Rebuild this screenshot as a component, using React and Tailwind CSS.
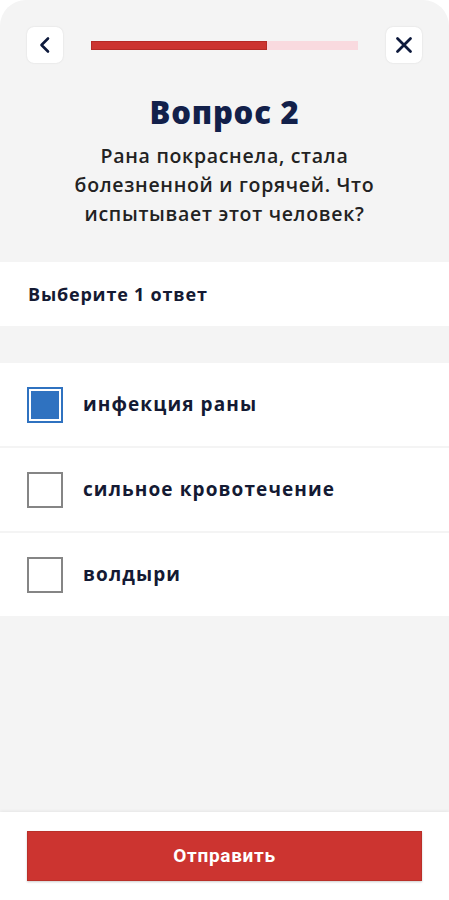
import React, { useState } from 'react';

const options = ['инфекция раны', 'сильное кровотечение', 'волдыри'];

function Checkbox({ checked }) {
  if (checked) {
    return (
      <div className="w-9 h-9 shrink-0 border-2 border-[#2f72c0] p-[2px] bg-white">
        <div className="w-full h-full bg-[#2f72c0]"></div>
      </div>
    );
  }
  return <div className="w-9 h-9 shrink-0 border-2 border-[#858585] bg-white"></div>;
}

export default function App() {
  const [selected, setSelected] = useState(0);

  return (
    <div className="bg-white w-[449px] h-[900px]">
      <div
        className="flex flex-col h-[900px] bg-[#f4f4f4] rounded-t-[26px] overflow-hidden"
        style={{ fontFamily: '"Open Sans", "Noto Sans", sans-serif' }}
      >
        {/* Header */}
        <div className="flex items-center gap-7 px-[27px] pt-[27px]">
          <button className="w-9 h-9 rounded-[7px] bg-white shadow-[0_0_2px_rgba(0,0,0,0.12)] flex items-center justify-center">
            <svg width="20" height="20" viewBox="0 0 20 20" fill="none">
              <path d="M13 3.5 L6.5 10 L13 16.5" stroke="#0e1a3c" strokeWidth="2.6" strokeLinecap="round" strokeLinejoin="round" />
            </svg>
          </button>
          <div className="flex-1 h-[9px] bg-[#f9dadf] flex">
            <div className="w-[66%] h-full bg-[#cc3430] border border-[#b52a26]"></div>
          </div>
          <button className="w-9 h-9 rounded-[7px] bg-white shadow-[0_0_2px_rgba(0,0,0,0.12)] flex items-center justify-center">
            <svg width="18" height="18" viewBox="0 0 18 18" fill="none">
              <path d="M2.5 2.5 L15.5 15.5 M15.5 2.5 L2.5 15.5" stroke="#0e1a3c" strokeWidth="2.8" strokeLinecap="round" />
            </svg>
          </button>
        </div>

        {/* Question */}
        <div className="flex flex-col items-center pt-[30px] pb-[34px]">
          <h1 className="text-[31px] leading-[38px] font-extrabold text-[#12204a] tracking-[0.8px]">
            Вопрос 2
          </h1>
          <p className="mt-[10px] w-[330px] text-center text-[19.5px] leading-[29px] font-semibold text-[#222222] tracking-[0.7px]">
            Рана покраснела, стала болезненной и горячей. Что испытывает этот человек?
          </p>
        </div>

        {/* Hint */}
        <div className="bg-white h-[64px] flex items-center px-[28px]">
          <span className="text-[18px] font-bold text-[#141a33] tracking-[0.8px]">Выберите 1 ответ</span>
        </div>

        {/* Options */}
        <div className="mt-[37px] flex flex-col gap-[2px]">
          {options.map((opt, i) => (
            <div
              key={opt}
              onClick={() => setSelected(i)}
              className="bg-white h-[83px] flex items-center gap-5 px-[27px] cursor-pointer"
            >
              <Checkbox checked={selected === i} />
              <span className="text-[19px] font-bold text-[#141a33] tracking-[1.1px]">{opt}</span>
            </div>
          ))}
        </div>

        <div className="flex-1"></div>

        {/* Footer */}
        <div className="bg-white h-[88px] shadow-[0_-1px_3px_rgba(0,0,0,0.06)] px-[27px] pt-[19px]">
          <button
            className="w-full h-[50px] bg-[#cc3430] border border-[#b93029] shadow-[0_1px_2px_rgba(0,0,0,0.2)] text-white text-[19px] font-bold tracking-[0.7px]"
            style={{ fontFamily: 'Roboto, sans-serif' }}
          >
            Отправить
          </button>
        </div>
      </div>
    </div>
  );
}
